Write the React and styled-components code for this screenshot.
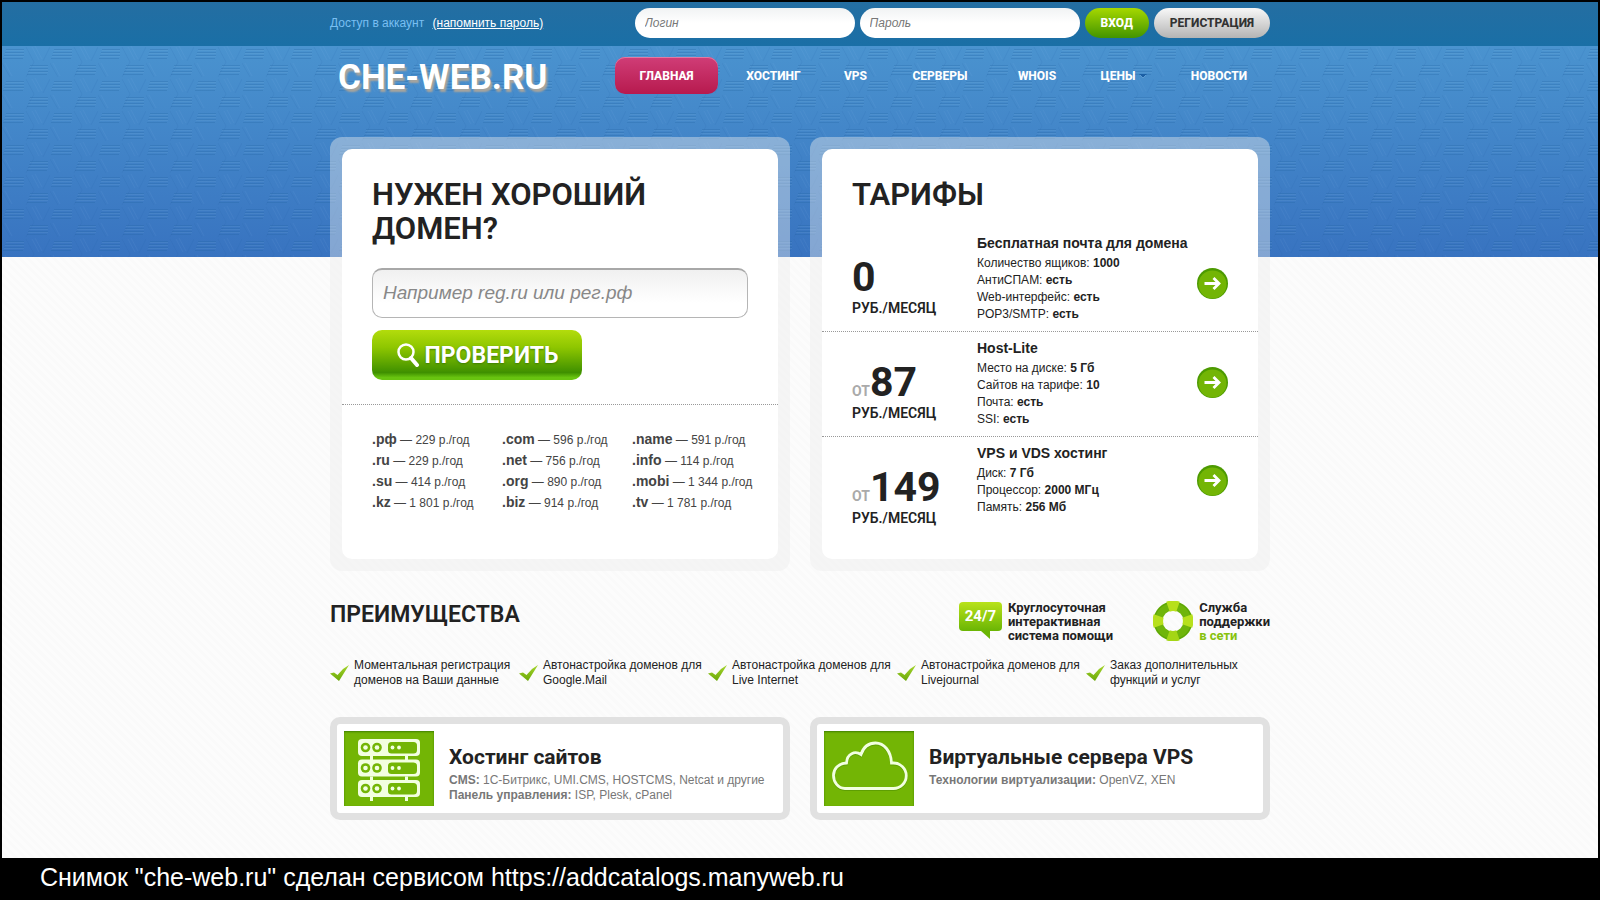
import styled, { createGlobalStyle, css } from "styled-components";

const tariffs = [
  {
    price: "0",
    title: "Бесплатная почта для домена",
    specs: [
      ["Количество ящиков:", "1000"],
      ["АнтиСПАМ:", "есть"],
      ["Web-интерфейс:", "есть"],
      ["POP3/SMTP:", "есть"],
    ],
  },
  {
    from: true,
    price: "87",
    title: "Host-Lite",
    specs: [
      ["Место на диске:", "5 Гб"],
      ["Сайтов на тарифе:", "10"],
      ["Почта:", "есть"],
      ["SSI:", "есть"],
    ],
  },
  {
    from: true,
    price: "149",
    title: "VPS и VDS хостинг",
    specs: [
      ["Диск:", "7 Гб"],
      ["Процессор:", "2000 МГц"],
      ["Память:", "256 Мб"],
    ],
  },
];

const zones = [
  [".рф", "229"],
  [".com", "596"],
  [".name", "591"],
  [".ru", "229"],
  [".net", "756"],
  [".info", "114"],
  [".su", "414"],
  [".org", "890"],
  [".mobi", "1 344"],
  [".kz", "1 801"],
  [".biz", "914"],
  [".tv", "1 781"],
];

const features = [
  ["Моментальная регистрация", "доменов на Ваши данные"],
  ["Автонастройка доменов для", "Google.Mail"],
  ["Автонастройка доменов для", "Live Internet"],
  ["Автонастройка доменов для", "Livejournal"],
  ["Заказ дополнительных", "функций и услуг"],
];

export default function App() {
  return (
    <>
      <GlobalStyle />
      <Screen>
        <Site>
          <TopBar>
            <TopInner>
              <Account>
                Доступ в аккаунт <a href="#remind">(напомнить пароль)</a>
              </Account>
              <LoginForm onSubmit={(e) => e.preventDefault()}>
                <LoginInput placeholder="Логин" aria-label="Логин" />
                <LoginInput
                  type="password"
                  placeholder="Пароль"
                  aria-label="Пароль"
                />
                <PillButton $green>ВХОД</PillButton>
                <PillButton type="button">РЕГИСТРАЦИЯ</PillButton>
              </LoginForm>
            </TopInner>
          </TopBar>

          <Hero>
            <CubePattern />
            <Header>
              <Logo href="#home">CHE-WEB.RU</Logo>
              <Nav>
                <NavLink href="#home" $active>
                  ГЛАВНАЯ
                </NavLink>
                <NavLink href="#hosting">ХОСТИНГ</NavLink>
                <NavLink href="#vps">VPS</NavLink>
                <NavLink href="#servers">СЕРВЕРЫ</NavLink>
                <NavLink href="#whois">WHOIS</NavLink>
                <NavLink href="#prices">
                  ЦЕНЫ <Caret />
                </NavLink>
                <NavLink href="#news">НОВОСТИ</NavLink>
              </Nav>
            </Header>
          </Hero>

          <Main>
            <Columns>
              <Panel>
                <PanelBody>
                  <DomainForm onSubmit={(e) => e.preventDefault()}>
                    <Title>
                      НУЖЕН ХОРОШИЙ
                      <br />
                      ДОМЕН?
                    </Title>
                    <DomainInput
                      placeholder="Например reg.ru или рег.рф"
                      aria-label="Домен"
                    />
                    <CheckButton>
                      <SearchIcon />
                      ПРОВЕРИТЬ
                    </CheckButton>
                  </DomainForm>
                  <Zones>
                    {zones.map(([name, price]) => (
                      <li key={name}>
                        <b>{name}</b> — {price} р./год
                      </li>
                    ))}
                  </Zones>
                </PanelBody>
              </Panel>

              <Panel>
                <PanelBody>
                  <TariffHead>
                    <Title>ТАРИФЫ</Title>
                  </TariffHead>
                  {tariffs.map((t) => (
                    <Tariff key={t.title}>
                      <Price>
                        <div>
                          {t.from && <From>ОТ</From>}
                          <Amount>{t.price}</Amount>
                        </div>
                        <Per>РУБ./МЕСЯЦ</Per>
                      </Price>
                      <Details>
                        <h3>{t.title}</h3>
                        {t.specs.map(([label, value]) => (
                          <p key={label}>
                            {label} <b>{value}</b>
                          </p>
                        ))}
                      </Details>
                      <ArrowLink href="#order" aria-label={t.title}>
                        <ArrowIcon />
                      </ArrowLink>
                    </Tariff>
                  ))}
                </PanelBody>
              </Panel>
            </Columns>

            <AdvantagesHead>
              <Subtitle>ПРЕИМУЩЕСТВА</Subtitle>
              <Support>
                <Bubble>24/7</Bubble>
                <SupportText>
                  Круглосуточная
                  <br />
                  интерактивная
                  <br />
                  система помощи
                </SupportText>
              </Support>
              <Support>
                <LifebuoyIcon />
                <SupportText>
                  Служба
                  <br />
                  поддержки
                  <br />
                  <a href="#support">в сети</a>
                </SupportText>
              </Support>
            </AdvantagesHead>

            <Features>
              {features.map(([first, second]) => (
                <Feature key={first + second}>
                  <CheckIcon />
                  <span>
                    {first}
                    <br />
                    {second}
                  </span>
                </Feature>
              ))}
            </Features>

            <Columns>
              <Promo>
                <PromoIcon>
                  <ServersIcon />
                </PromoIcon>
                <PromoText>
                  <h2>Хостинг сайтов</h2>
                  <p>
                    <b>CMS:</b> 1С-Битрикс, UMI.CMS, HOSTCMS, Netcat и другие
                  </p>
                  <p>
                    <b>Панель управления:</b> ISP, Plesk, cPanel
                  </p>
                </PromoText>
              </Promo>
              <Promo>
                <PromoIcon>
                  <CloudIcon />
                </PromoIcon>
                <PromoText>
                  <h2>Виртуальные сервера VPS</h2>
                  <p>
                    <b>Технологии виртуализации:</b> OpenVZ, XEN
                  </p>
                </PromoText>
              </Promo>
            </Columns>
          </Main>
        </Site>
        <Caption>
          Снимок "che-web.ru" сделан сервисом https://addcatalogs.manyweb.ru
        </Caption>
      </Screen>
    </>
  );
}

// icons
const CubePattern = () => (
  <PatternSvg aria-hidden="true">
    <defs>
      <pattern id="cubes" width="48" height="32" patternUnits="userSpaceOnUse">
        <g fill="none" stroke="#1f5f9f" strokeOpacity="0.26">
          <path d="M4 3.500h18M3 6.500h19M2 9.500h20M1 12.500h20M28 19.500h18M27 22.500h19M26 25.500h20M25 28.500h20" />
          <path d="M24 1l8 15-8 15M48 1l-7 14M0 17l8 14" strokeOpacity="0.13" />
        </g>
        <g fill="none" stroke="#9fd0f2" strokeOpacity="0.1">
          <path d="M4 4.500h18M3 7.500h19M2 10.500h20M28 20.500h18M27 23.500h19M26 26.500h20" />
          <path d="M30 1l7 13M33 0l7 13M3 17l7 13" strokeOpacity="0.06" />
        </g>
      </pattern>
    </defs>
    <rect width="100%" height="100%" fill="url(#cubes)" />
  </PatternSvg>
);

const Caret = () => (
  <svg width="8" height="5" viewBox="0 0 8 5">
    <path d="M0 0h8L4 4z" fill="#1b5fa5" />
    <path d="M1 1l3 3 3-3" fill="none" stroke="#7db8e6" strokeWidth="0.6" />
  </svg>
);

const SearchIcon = () => (
  <svg width="24" height="24" viewBox="0 0 24 24" fill="none" stroke="#fff">
    <circle cx="10" cy="9" r="7.5" strokeWidth="2.5" />
    <path d="M15 15l6 7" strokeWidth="4" strokeLinecap="round" />
  </svg>
);

const ArrowIcon = () => (
  <svg width="31" height="31" viewBox="0 0 31 31">
    <circle cx="15.5" cy="15.5" r="15.5" fill="#4c9a00" />
    <circle cx="15.5" cy="16.5" r="14" fill="#73b505" />
    <path
      d="M7.500 15.500H22M16.500 10l5.500 5.500-5.500 5.500"
      fill="none"
      stroke="#fff"
      strokeWidth="2.800"
    />
  </svg>
);

const CheckIcon = () => (
  <svg width="19" height="16" viewBox="0 0 19 16">
    <defs>
      <linearGradient id="tick" x1="0" x2="0" y1="0" y2="1">
        <stop offset="0" stopColor="#a6d62c" />
        <stop offset="1" stopColor="#6aa808" />
      </linearGradient>
    </defs>
    <path d="M0 8.500L4 7.500 7.500 10 13 4 19 0 9 16z" fill="url(#tick)" />
  </svg>
);

const LifebuoyIcon = () => (
  <svg width="40" height="40" viewBox="0 0 40 40" fill="none">
    <circle cx="20" cy="20" r="15" stroke="#6fb50a" strokeWidth="9" />
    <circle cx="20" cy="20" r="18.500" stroke="#57a208" strokeWidth="1" />
    <g stroke="#b7e01c" strokeWidth="10.500">
      <path d="M15 5.700A15 15 0 0 1 25 5.700" />
      <path d="M15 34.300A15 15 0 0 0 25 34.300" stroke="#a4d615" />
      <path d="M5.700 15A15 15 0 0 0 5.700 25" />
      <path d="M34.300 15A15 15 0 0 1 34.300 25" />
    </g>
  </svg>
);

const ServersIcon = () => (
  <svg width="90" height="75" viewBox="0 0 90 75">
    <g fill="#f2ffe0">
      {[8, 28.5, 49].map((y) => (
        <g key={y}>
          <rect x="14" y={y} width="62" height="17" rx="4" />
          <path d={`M26 ${y + 17}h3v4h-3zM61 ${y + 17}h3v4h-3z`} />
          <g fill="#73b505">
            <circle cx="21.500" cy={y + 8.500} r="4.800" />
            <circle cx="33" cy={y + 8.500} r="4.800" />
            <rect x="30" y={y + 3} width="0" height="0" />
            <rect x="44" y={y + 3} width="29" height="11.500" rx="3.500" />
          </g>
          <circle cx="21.500" cy={y + 8.500} r="2.300" />
          <circle cx="33" cy={y + 8.500} r="2.300" />
          <circle cx="48.500" cy={y + 8.500} r="1.900" />
          <circle cx="55" cy={y + 8.500} r="1.900" />
        </g>
      ))}
    </g>
  </svg>
);

const CloudIcon = () => (
  <svg width="90" height="75" viewBox="0 0 90 75" fill="none">
    <path
      d="M21 57.500h48.500a12 12 0 0 0 0-25.500h-2C67 20 60 12 51.500 12c-6.500 0-12 4-14.500 11.500-6-4-14-1-14.500 8.500C14 32.500 9.500 38 9.500 44.500S14 57.500 21 57.500z"
      stroke="#3f7f00"
      strokeOpacity="0.4"
      strokeWidth="2.800"
      transform="translate(0 1)"
    />
    <path
      d="M21 57.500h48.500a12 12 0 0 0 0-25.500h-2C67 20 60 12 51.500 12c-6.500 0-12 4-14.500 11.500-6-4-14-1-14.500 8.500C14 32.500 9.500 38 9.500 44.500S14 57.500 21 57.500z"
      stroke="#f2ffe0"
      strokeWidth="2.800"
    />
  </svg>
);

const GlobalStyle = createGlobalStyle`
  * {
    box-sizing: border-box;
  }

  body {
    margin: 0;
    background: #000;
    color: #222;
    font: 12px/15px "Liberation Sans", Arial, sans-serif;
  }

  h1, h2, h3, p, ul {
    margin: 0;
    padding: 0;
  }

  input, button {
    font-family: inherit;
    border: 0;
  }

  svg {
    flex-shrink: 0;
  }
`;

const dinFont = css`
  font-family: Roboto, "Open Sans", sans-serif;
`;

const container = css`
  width: 100%;
  max-width: 940px;
  margin: 0 auto;
`;

// layout
const Screen = styled.div`
  display: flex;
  flex-direction: column;
  height: 100vh;
`;

const Site = styled.div`
  flex: 1;
  min-height: 0;
  overflow: hidden;
  border: solid #000;
  border-width: 2px 2px 0;
  background: repeating-linear-gradient(
    45deg,
    #fcfcfc 0 3px,
    #fafafa 3px 6px
  );
`;

const TopBar = styled.div`
  background: linear-gradient(#246ea2, #1a6fa6);
`;

const TopInner = styled.div`
  ${container}
  display: flex;
  align-items: center;
  justify-content: space-between;
  height: 44px;
  padding-bottom: 2px;
`;

const Account = styled.div`
  color: #79bff2;

  a {
    margin-left: 5px;
    color: #fff;
  }
`;

const LoginForm = styled.form`
  display: flex;
  gap: 5px;
`;

const LoginInput = styled.input`
  width: 220px;
  height: 30px;
  padding: 0 10px;
  border-radius: 15px;
  background: linear-gradient(#f1f3f4, #fff 50%);
  font-size: 12px;

  &::placeholder {
    color: #777;
    font-style: italic;
  }
`;

const PillButton = styled.button`
  ${dinFont}
  height: 30px;
  padding: 0 16px;
  border-radius: 15px;
  background: ${(p) =>
    p.$green
      ? "linear-gradient(#a6d800, #429400)"
      : "linear-gradient(#f8f8f8, #b4b4b4)"};
  color: ${(p) => (p.$green ? "#fff" : "#333")};
  font-size: 12px;
  font-weight: 800;
  cursor: pointer;
`;

const Hero = styled.div`
  position: relative;
  height: 211px;
  background: linear-gradient(#4a93cf, #3873c0);
`;

const PatternSvg = styled.svg`
  position: absolute;
  inset: 0;
  width: 100%;
  height: 100%;
`;

const Header = styled.header`
  ${container}
  position: relative;
  display: flex;
  justify-content: space-between;
  padding: 11px 4px 0 8px;
`;

const Logo = styled.a`
  ${dinFont}
  color: #fff;
  font-size: 35px;
  font-weight: 700;
  line-height: 42px;
  text-decoration: none;
  text-shadow: 2px 3px 2px #a9a59c;
`;

const Nav = styled.nav`
  display: grid;
  grid-template-columns: 103fr 111fr 53fr 116fr 78fr 96fr 94fr;
  width: 651px;
  height: 37px;
`;

const NavLink = styled.a`
  ${dinFont}
  display: flex;
  align-items: center;
  justify-content: center;
  gap: 4px;
  padding-top: 2px;
  color: #fff;
  font-size: 12px;
  font-weight: 800;
  text-decoration: none;

  ${(p) =>
    p.$active &&
    css`
      border-radius: 10px;
      background: linear-gradient(#d03d77, #b71a4e);
      box-shadow: inset 0 1px 0 #e27aa2;
    `}
`;

const Main = styled.main`
  ${container}
  position: relative;
  margin-top: -120px;
`;

const Columns = styled.div`
  display: grid;
  grid-template-columns: 1fr 1fr;
  gap: 20px;
`;

const Panel = styled.section`
  display: flex;
  padding: 12px;
  border-radius: 12px;
  background: rgba(236, 236, 236, 0.42);
`;

const PanelBody = styled.div`
  flex: 1;
  min-height: 410px;
  border-radius: 10px;
  background: #fff;
`;

const Title = styled.h1`
  ${dinFont}
  color: #222;
  font-size: 31px;
  font-weight: 600;
  line-height: 34px;
`;

// domain search
const DomainForm = styled.form`
  padding: 29px 30px 24px;
  border-bottom: 1px dotted #999;
`;

const DomainInput = styled.input`
  display: block;
  width: 100%;
  height: 50px;
  margin: 22px 0 12px;
  padding: 0 10px 2px;
  border: 1px solid #b5b5b5;
  border-top: 2px solid #a8a8a8;
  border-radius: 10px;
  background: linear-gradient(#f0f0f0, #fff 70%);
  font-size: 19px;

  &::placeholder {
    color: #888;
    font-style: italic;
  }
`;

const CheckButton = styled.button`
  ${dinFont}
  display: flex;
  align-items: center;
  justify-content: center;
  gap: 5px;
  width: 210px;
  height: 50px;
  border-radius: 10px;
  background: linear-gradient(#b3dc0c, #8ec600 35%, #3f9000 85%, #68c410 95%);
  color: #fff;
  font-size: 23px;
  font-weight: 700;
  text-shadow: 0 1px 2px #3f7f00;
  cursor: pointer;
`;

const Zones = styled.ul`
  display: grid;
  grid-template-columns: repeat(3, 130px);
  grid-auto-rows: 21px;
  padding: 24px 0 0 30px;
  color: #444;
  line-height: 21px;
  list-style: none;
  white-space: nowrap;

  b {
    font-size: 14px;
  }
`;

// tariffs
const TariffHead = styled.div`
  padding: 29px 30px 23px;
`;

const Price = styled.div`
  ${dinFont}
  width: 125px;
  padding-top: 21px;
  white-space: nowrap;
`;

const Details = styled.div`
  flex: 1;
  line-height: 17px;

  h3 {
    margin-bottom: 3px;
    font-size: 14px;
  }
`;

const ArrowLink = styled.a`
  display: flex;
  align-self: center;
`;

const Tariff = styled.div`
  display: flex;
  padding: 0 30px;

  &:not(:last-child) {
    min-height: 97px;
    border-bottom: 1px dotted #999;
  }

  & + & ${Price} {
    padding-top: 29px;
  }

  & + & ${Details} {
    padding: 8px 0;
  }

  & + & ${ArrowLink} {
    padding-bottom: 3px;
  }
`;

const From = styled.span`
  color: #aaa;
  font-size: 14px;
  font-weight: 700;
`;

const Amount = styled.span`
  font-size: 41px;
  font-weight: 700;
  line-height: 43px;
`;

const Per = styled.div`
  font-size: 14px;
  font-weight: 600;
  line-height: 18px;
`;

// advantages
const AdvantagesHead = styled.div`
  display: flex;
  gap: 40px;
  margin-top: 30px;
`;

const Subtitle = styled.h2`
  ${dinFont}
  flex: 1;
  font-size: 23px;
  font-weight: 600;
  line-height: 28px;
`;

const Support = styled.div`
  display: flex;
  gap: 6px;
`;

const SupportText = styled.p`
  ${dinFont}
  font-size: 13px;
  font-weight: 700;
  line-height: 14px;

  a {
    color: #86c20c;
    text-decoration: none;
  }
`;

const Bubble = styled.div`
  ${dinFont}
  position: relative;
  width: 43px;
  height: 29px;
  margin-top: 1px;
  border-radius: 4px;
  background: linear-gradient(#b9e21a, #6ab504);
  color: #fff;
  font-size: 15px;
  font-weight: 700;
  line-height: 29px;
  text-align: center;

  &::after {
    content: "";
    position: absolute;
    top: 100%;
    left: 22px;
    border-top: 8px solid #6ab504;
    border-left: 9px solid transparent;
  }
`;

const Features = styled.ul`
  display: grid;
  grid-template-columns: repeat(5, 1fr);
  margin: 15px -5px 29px 0;
  list-style: none;
`;

const Feature = styled.li`
  display: flex;
  align-items: center;
  gap: 5px;
  white-space: nowrap;
`;

// promo boxes
const Promo = styled.section`
  display: flex;
  gap: 15px;
  padding: 7px;
  border: 7px solid #e1e1e1;
  border-radius: 10px;
  background: #fff;
`;

const PromoIcon = styled.div`
  display: flex;
  background: #73b505;
  box-shadow: inset 0 1px 2px #3f7f00;
`;

const PromoText = styled.div`
  color: #777;

  h2 {
    ${dinFont}
    margin: 13px 0 3px;
    color: #222;
    font-size: 21px;
    font-weight: 700;
    line-height: 26px;
  }
`;

const Caption = styled.footer`
  height: 42px;
  padding-left: 40px;
  background: #000;
  color: #fff;
  font-size: 25px;
  line-height: 38px;
`;
